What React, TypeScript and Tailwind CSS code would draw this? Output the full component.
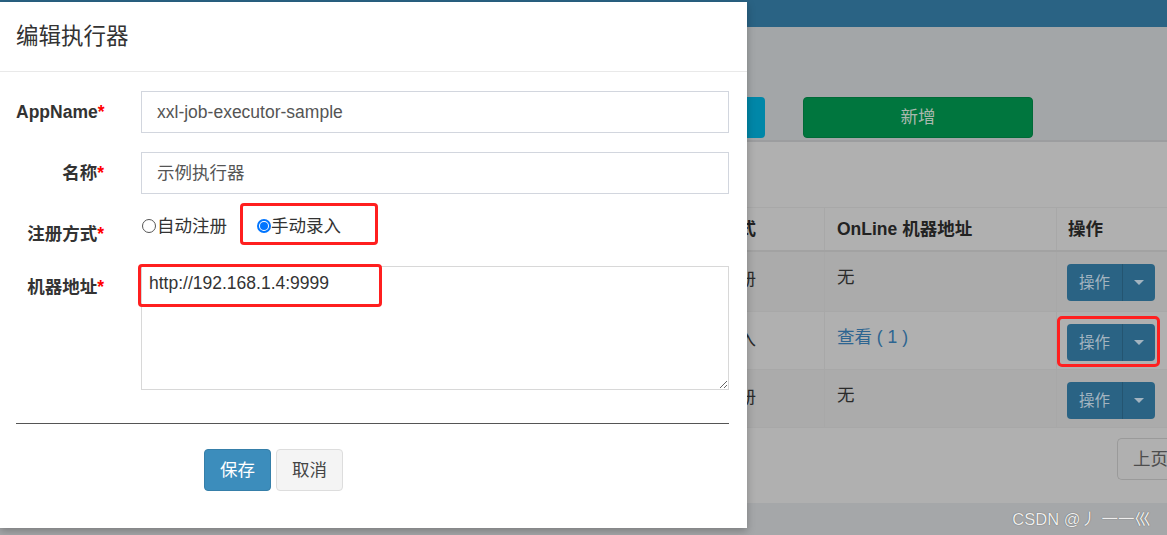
const font = "font-['Liberation_Sans','Noto_Sans_CJK_SC',sans-serif]";

function OpButton() {
  return (
    <div className="flex h-[37px] w-[88px] overflow-hidden rounded-[4px] bg-[#2a6384]">
      <div className="flex w-[56px] items-center justify-center border-r border-[#245571] text-[15.5px] text-[#a3b4c0]">
        操作
      </div>
      <div className="flex flex-1 items-center justify-center">
        <span className="h-0 w-0 border-x-[5px] border-t-[5px] border-x-transparent border-t-[#a3b4c0]" />
      </div>
    </div>
  );
}

const rows = [
  { type: "自动注册", online: "无", link: false, bg: "bg-[#ababab]", h: "h-[60px]" },
  { type: "手动录入", online: "查看 ( 1 )", link: true, bg: "bg-[#b0b0b0]", h: "h-[58px]" },
  { type: "自动注册", online: "无", link: false, bg: "bg-[#ababab]", h: "h-[58px]" },
];

function BackPage() {
  return (
    <div className="flex h-full w-full flex-col">
      <div className="h-[27px] bg-[#2a6384]" />
      <div className="flex h-[113px] items-start bg-[#a3a6a8] pt-[70px]">
        <div className="ml-[600px] h-[41px] w-[165px] rounded-[4px] bg-[#0087a8]" />
        <div className="ml-[38px] flex h-[41px] w-[230px] items-center justify-center rounded-[4px] border border-[#006a37] bg-[#00763e] text-[17.5px] text-[#a9b8ae]">
          新增
        </div>
      </div>
      <div className="h-[2px] bg-[#9c9d9f]" />
      <div className="flex flex-1 flex-col bg-[#b0b0b0] pt-[65px]">
        <div className="flex h-[45px] border-t border-b-2 border-t-[#a8a8a8] border-b-[#a2a2a2] text-[17.5px] font-bold text-[#222]">
          <div className="w-[674px]" />
          <div className="flex w-[150px] items-center px-[12px]">注册方式</div>
          <div className="flex w-[232px] items-center border-l border-[#a8a8a8] px-[12px]">OnLine 机器地址</div>
          <div className="flex flex-1 items-center border-l border-[#a8a8a8] px-[11px]">操作</div>
        </div>
        {rows.map((r, i) => (
          <div key={i} className={`flex ${r.h} ${r.bg} border-b border-[#a8a8a8] text-[17.5px] text-[#2a2a2a]`}>
            <div className="w-[674px]" />
            <div className="flex w-[150px] items-start px-[12px] pt-[14px]">{r.type}</div>
            <div className={`flex w-[232px] items-start border-l border-[#a8a8a8] px-[12px] pt-[12px] ${r.link ? "text-[#2d6591]" : ""}`}>
              {r.online}
            </div>
            <div className="flex flex-1 items-start border-l border-[#a8a8a8] px-[10px] pt-[12px]">
              <OpButton />
            </div>
          </div>
        ))}
        <div className="flex justify-end pt-[10px]">
          <div className="flex h-[42px] w-[50px] items-center rounded-l-[5px] border border-r-0 border-[#9a9a9a] pl-[15px] text-[17.5px] whitespace-nowrap text-[#4d4d4d]">
            上页
          </div>
        </div>
      </div>
      <div className="flex h-[32px] items-center justify-end bg-[#a5a7a9] pr-[16px]">
        <span className="text-[16.5px] text-[#eeeeee] [text-shadow:0_0_1px_#444]">CSDN @丿 一一巛</span>
      </div>
    </div>
  );
}

function Label({ text }: { text: string }) {
  return (
    <span className="block w-[88px] shrink-0 text-right text-[17.5px] font-bold leading-[24px] text-[#333]">
      {text}
      <span className="text-[#f00]">*</span>
    </span>
  );
}

function Modal() {
  return (
    <div className="absolute left-0 top-[2px] flex h-[526px] w-[747px] flex-col bg-white shadow-[0_3px_8px_rgba(0,0,0,0.25)]">
      <div className="flex h-[70px] items-center border-b border-[#e9e9e9] pl-[16px] text-[22.5px] text-[#333]">
        编辑执行器
      </div>
      <div className="relative flex flex-col pl-[16px] pr-[18px]">
        <div className="mt-[19px] flex items-center gap-[37px]">
          <Label text="AppName" />
          <div className="flex h-[42px] flex-1 items-center border border-[#d2d6de] px-[15px] text-[17.5px] text-[#555]">
            xxl-job-executor-sample
          </div>
        </div>
        <div className="mt-[19px] flex items-center gap-[37px]">
          <Label text="名称" />
          <div className="flex h-[42px] flex-1 items-center border border-[#d2d6de] px-[15px] text-[17.5px] text-[#555]">
            示例执行器
          </div>
        </div>
        <div className="mt-[20px] flex h-[32px] items-start gap-[37px]">
          <div className="shrink-0 pt-[8px]">
            <Label text="注册方式" />
          </div>
          <div className="flex items-center text-[17.5px] leading-[24px] text-[#333]">
            <span className="ml-[1px] h-[14px] w-[14px] rounded-full border border-[#555]" />
            <span className="ml-[1px]">自动注册</span>
            <span className="ml-[30px] flex h-[14px] w-[14px] items-center justify-center rounded-full border-2 border-[#0075ff] bg-white">
              <span className="h-[8px] w-[8px] rounded-full bg-[#0075ff]" />
            </span>
            <span>手动录入</span>
          </div>
        </div>
        <div className="mt-[20px] flex items-start gap-[37px]">
          <div className="shrink-0 pt-[9px]">
            <Label text="机器地址" />
          </div>
          <textarea
            readOnly
            defaultValue="http://192.168.1.4:9999"
            className="h-[124px] flex-1 border border-[#d8d8d8] px-[7px] pt-[5px] text-[17.5px] leading-[22px] text-[#333] outline-none"
          />
        </div>
        <div className="mt-[33px] h-px bg-[#555]" />
        <div className="mt-[25px] flex gap-[5px] pl-[188px]">
          <div className="flex h-[42px] w-[67px] items-center justify-center rounded-[4px] border border-[#367fa9] bg-[#3c8dbc] text-[17.5px] text-white">
            保存
          </div>
          <div className="flex h-[42px] w-[67px] items-center justify-center rounded-[4px] border border-[#ddd] bg-[#f4f4f4] text-[17.5px] text-[#444]">
            取消
          </div>
        </div>
        {/* annotation boxes */}
        <div className="absolute left-[240px] top-[131px] h-[42px] w-[138px] rounded-[4px] border-[3px] border-[#ff1f1f]" />
        <div className="absolute left-[138px] top-[192px] h-[43px] w-[244px] rounded-[4px] border-[3px] border-[#ff1f1f]" />
      </div>
    </div>
  );
}

export default function App() {
  return (
    <div className={`relative h-[535px] w-[1167px] overflow-hidden ${font}`}>
      <BackPage />
      <Modal />
      <div className="absolute left-[1057px] top-[316px] h-[51px] w-[103px] rounded-[5px] border-[3px] border-[#ff1f1f]" />
    </div>
  );
}
